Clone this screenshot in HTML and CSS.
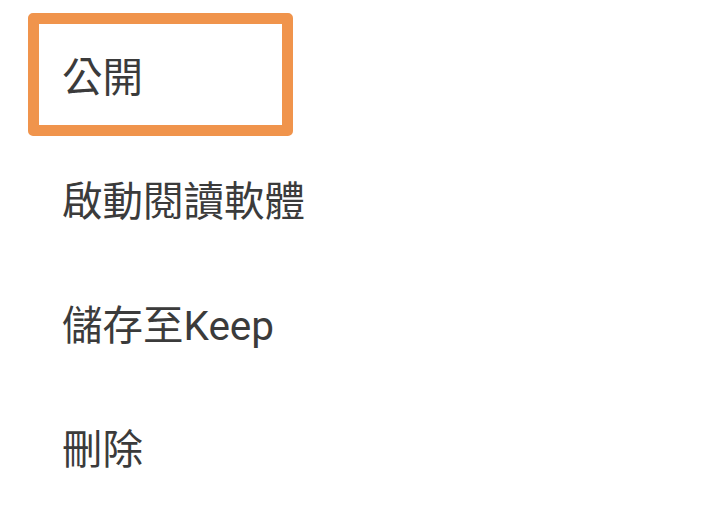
FILE: index.html
```html
<!DOCTYPE html>
<html lang="zh-Hant">
<head>
    <meta charset="UTF-8">
    <meta name="viewport" content="width=device-width, initial-scale=1.0">
    <title>選單</title>
    <link rel="stylesheet" href="styles.css">
</head>
<body>
    <ul class="menu">
        <li class="menu-item focused">公開</li>
        <li class="menu-item">啟動閱讀軟體</li>
        <li class="menu-item">儲存至Keep</li>
        <li class="menu-item">刪除</li>
    </ul>
</body>
</html>
```

FILE: styles.css
```css
body {
    margin: 0;
    background-color: #FFFFFF;
    font-family: Roboto, "Noto Sans CJK TC", sans-serif;
    color: #3B3B3B; /* dark gray text */
}
.menu {
    list-style: none;
    margin: 0;
    padding: 13px 0 0 28px;
}
.menu-item {
    box-sizing: border-box;
    width: 265px;
    height: 124px;
    display: flex;
    align-items: center;
    padding-left: 23px;
    border: 11px solid transparent;
    border-radius: 5px;
    font-size: 40.5px;
    white-space: nowrap;
}
.menu-item.focused {
    height: 123px;
    border-color: #F0944C; /* orange focus ring */
}
```
